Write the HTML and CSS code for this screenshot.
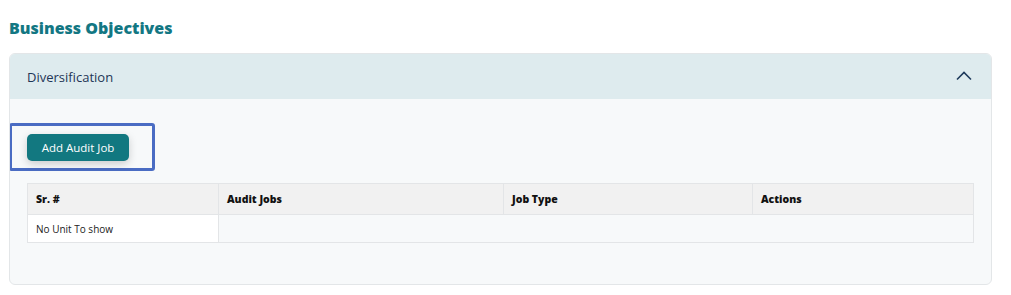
FILE: index.html
```html
<!DOCTYPE html>
<html lang="en">
  <head>
    <meta charset="UTF-8" />
    <meta name="viewport" content="width=device-width, initial-scale=1.0" />
    <title>Business Objectives</title>
    <link rel="stylesheet" href="styles.css">
  </head>

  <body>
    <div class="page">
      <h2 class="page-title">Business Objectives</h2>

      <div class="accordion">
        <div class="accordion-header">
          <span class="accordion-title">Diversification</span>
          <svg class="chevron" width="16" height="10" viewBox="0 0 16 10">
            <path d="M1 8.5 L8 1.5 L15 8.5" fill="none" stroke="#1f3b5c" stroke-width="1.6" />
          </svg>
        </div>

        <div class="accordion-body">
          <!-- highlighted action -->
          <div class="highlight">
            <button class="btn-add">Add Audit Job</button>
          </div>

          <table class="jobs-table">
            <thead>
              <tr>
                <th class="col-sr">Sr. #</th>
                <th class="col-jobs">Audit Jobs</th>
                <th class="col-type">Job Type</th>
                <th>Actions</th>
              </tr>
            </thead>
            <tbody>
              <tr>
                <td class="empty-cell">No Unit To show</td>
                <td colspan="3"></td>
              </tr>
            </tbody>
          </table>
        </div>
      </div>
    </div>
  </body>
</html>
```

FILE: styles.css
```css
body {
  margin: 0;
  background-color: #ffffff;
  font-family: "Open Sans", "Noto Sans", sans-serif;
}

.page {
  padding: 16px 19px 0 9px;
}

.page-title {
  margin: 0;
  font-size: 16px;
  line-height: 24px;
  font-weight: 800;
  color: #137783;
}

.accordion {
  margin-top: 13px;
  border: 1px solid #e3e6e8;
  border-radius: 6px;
  background-color: #f7f9fa;
  overflow: hidden;
}

.accordion-header {
  display: flex;
  justify-content: space-between;
  align-items: center;
  height: 45px;
  padding: 0 19px 0 17px;
  background-color: #deebee;
}

.accordion-title {
  font-size: 13px;
  color: #1e3656;
  font-weight: 500;
}

.chevron {
  margin-top: -2px;
}

.accordion-body {
  padding: 24px 17px 41px 17px;
}

.highlight {
  display: inline-block;
  margin-left: -18px;
  padding: 8px 23px 7px 15px;
  border: 3px solid #4a6cc3;
  border-radius: 3px;
}

.btn-add {
  width: 102px;
  height: 27px;
  border: none;
  border-radius: 5px;
  background-color: #127880;
  color: #ffffff;
  font-family: inherit;
  font-size: 11.5px;
  font-weight: 500;
  box-shadow: rgba(0, 0, 0, 0.18) 0px 3px 8px;
  cursor: pointer;
}

.jobs-table {
  width: 100%;
  margin-top: 12px;
  border-collapse: collapse;
  border: 1px solid #e3e5e7;
  font-size: 10.5px;
}

.jobs-table th {
  height: 30px;
  padding: 0 8px;
  text-align: left;
  font-weight: 800;
  color: #111111;
  background-color: #f1f1f1;
  border-left: 1px solid #e3e5e7;
}

.jobs-table td {
  height: 27px;
  padding: 0 8px;
  color: #222222;
  border-top: 1px solid #e3e5e7;
}

.col-sr {
  width: 174px;
}

.col-jobs {
  width: 268px;
}

.col-type {
  width: 232px;
}

.jobs-table .empty-cell {
  background-color: #ffffff;
  border-right: 1px solid #e3e5e7;
  font-size: 10px;
}
```
